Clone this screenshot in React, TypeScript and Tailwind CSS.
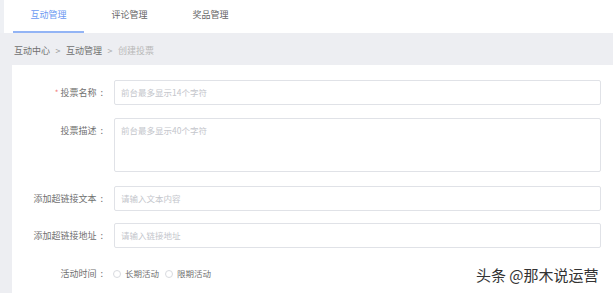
import React from "react";

const font = { fontFamily: '"Noto Sans CJK SC", "Noto Sans", sans-serif' };

function Label({ children, required }: { children: React.ReactNode; required?: boolean }) {
  return (
    <div className="w-[94px] shrink-0 flex justify-end items-center h-[25px] text-[9px] text-[#707070] pr-[3px]">
      {required && <span className="text-[#f07b7b] mr-[2px] text-[8px]">*</span>}
      <span>{children}</span>
      <span className="ml-[4px]">:</span>
    </div>
  );
}

function Input({ placeholder }: { placeholder: string }) {
  return (
    <div className="flex-1 h-[25px] border border-[#e0e2e7] rounded-[2px] ml-[8px] px-[6px] flex items-center text-[8.5px] text-[#c4c6cc]">
      {placeholder}
    </div>
  );
}

function Radio({ label }: { label: string }) {
  return (
    <div className="flex items-center">
      <span className="w-[8px] h-[8px] rounded-full border border-[#d8dadf] bg-white" />
      <span className="ml-[4px] text-[8.5px] text-[#707070]">{label}</span>
    </div>
  );
}

export default function App() {
  return (
    <div className="relative w-[613px] h-[293px] bg-white overflow-hidden" style={font}>
      {/* tab bar */}
      <div className="flex h-[33px]">
        <div className="w-[4px] bg-[#eef0f4]" />
        <div className="flex-1 flex pl-[9px] gap-[10px] bg-white">
          <div className="relative w-[71px] flex items-center justify-center text-[9px] text-[#6b9af2] pb-[4px]">
            互动管理
            <div className="absolute left-0 right-0 bottom-0 h-[2px] bg-[#93b4f5]" />
          </div>
          <div className="w-[71px] flex items-center justify-center text-[9px] text-[#666] pb-[4px]">评论管理</div>
          <div className="w-[71px] flex items-center justify-center text-[9px] text-[#666] pb-[4px]">奖品管理</div>
        </div>
      </div>
      {/* breadcrumb */}
      <div className="h-[32px] bg-[#edeef2] flex items-center pl-[14px] text-[9px] pt-[3px]">
        <span className="text-[#707070]">互动中心</span>
        <span className="w-[16px] text-center text-[#999]">&gt;</span>
        <span className="text-[#707070]">互动管理</span>
        <span className="w-[16px] text-center text-[#aaa]">&gt;</span>
        <span className="text-[#b8b8b8]">创建投票</span>
      </div>
      {/* form */}
      <div className="flex h-[228px]">
        <div className="w-[12px] bg-[#edeef2]" />
        <div className="flex-1 pr-[12px] pt-[15px] flex flex-col">
          <div className="flex">
            <Label required>投票名称</Label>
            <Input placeholder="前台最多显示14个字符" />
          </div>
          <div className="flex mt-[13px]">
            <Label>投票描述</Label>
            <div className="flex-1 h-[54px] border border-[#e0e2e7] rounded-[2px] ml-[8px] px-[6px] pt-[5px] text-[8.5px] text-[#c4c6cc]">
              前台最多显示40个字符
            </div>
          </div>
          <div className="flex mt-[14px]">
            <Label>添加超链接文本</Label>
            <Input placeholder="请输入文本内容" />
          </div>
          <div className="flex mt-[12px]">
            <Label>添加超链接地址</Label>
            <Input placeholder="请输入链接地址" />
          </div>
          <div className="flex mt-[13px] items-center">
            <Label>活动时间</Label>
            <div className="ml-[7px] flex items-center gap-[6px]">
              <Radio label="长期活动" />
              <Radio label="限期活动" />
            </div>
          </div>
        </div>
      </div>
      <div
        className="absolute left-[476px] top-[265px] text-[15px] leading-[20px] text-[#333]"
        style={{ textShadow: "0 0 2px #fff, 0 0 2px #fff" }}
      >
        头条 @那木说运营
      </div>
    </div>
  );
}
